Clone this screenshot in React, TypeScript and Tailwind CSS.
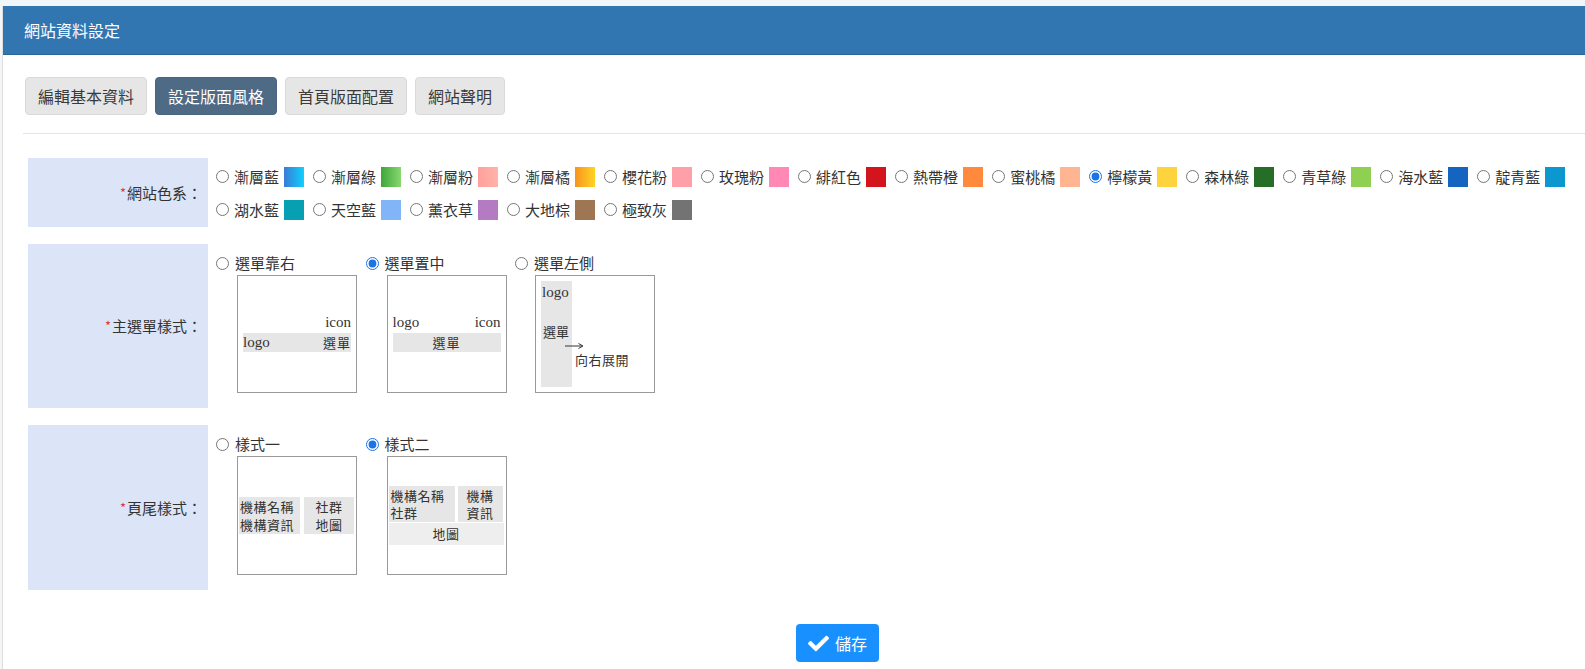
import React from "react";

const cjk = "font-['Noto_Sans_CJK_TC','Noto_Sans',sans-serif]";
const serif = "font-['Liberation_Serif','Noto_Sans_CJK_TC',serif]";

const colors: { name: string; cls: string }[] = [
  { name: "漸層藍", cls: "bg-[linear-gradient(to_right,#3a7bd5,#0fd0ff)]" },
  { name: "漸層綠", cls: "bg-[linear-gradient(to_right,#3ea53a,#88d86f)]" },
  { name: "漸層粉", cls: "bg-[linear-gradient(to_right,#ffa09e,#ffb3a8)]" },
  { name: "漸層橘", cls: "bg-[linear-gradient(to_right,#f7931e,#ffd524)]" },
  { name: "櫻花粉", cls: "bg-[#ffa0a8]" },
  { name: "玫瑰粉", cls: "bg-[#ff88b5]" },
  { name: "緋紅色", cls: "bg-[#d4141d]" },
  { name: "熱帶橙", cls: "bg-[#ff8a3d]" },
  { name: "蜜桃橘", cls: "bg-[#ffb591]" },
  { name: "檸檬黃", cls: "bg-[#ffd33d]" },
  { name: "森林綠", cls: "bg-[#266e27]" },
  { name: "青草綠", cls: "bg-[#8fd053]" },
  { name: "海水藍", cls: "bg-[#1565c0]" },
  { name: "靛青藍", cls: "bg-[#0c98cf]" },
  { name: "湖水藍", cls: "bg-[#07a0b3]" },
  { name: "天空藍", cls: "bg-[#82b5f7]" },
  { name: "薰衣草", cls: "bg-[#b47ac2]" },
  { name: "大地棕", cls: "bg-[#9e7654]" },
  { name: "極致灰", cls: "bg-[#737373]" },
];

function Label({ text }: { text: string }) {
  return (
    <div className="w-[180px] shrink-0 bg-[#dce5f8] flex items-center justify-end pr-[6px] text-[15px] leading-[22px]">
      <span className="text-[#e0393e] text-[13px] mr-[1px]">*</span>
      <span>{text}</span>
    </div>
  );
}

function Radio({ name, checked }: { name: string; checked?: boolean }) {
  return (
    <input
      type="radio"
      name={name}
      defaultChecked={checked}
      className="m-0 w-[13px] h-[13px] shrink-0 accent-[#1a73e8]"
    />
  );
}

const box = "w-[120px] border border-[#9a9a9a] bg-white text-[#333]";

export default function App() {
  return (
    <div className={`min-h-[669px] bg-[#f2f6f8] pt-[6px] pl-[2px] ${cjk} text-[#333]`}>
      <div className="bg-white border-l border-[#dedede] min-h-[663px]">
        <div className="h-[49px] bg-[#3276b1] border-b border-[#2b6699] flex items-center pl-[21px] text-white text-[16px]">
          網站資料設定
        </div>

        <div className="pt-[22px] pl-[22px] flex gap-[8px]">
          {["編輯基本資料", "設定版面風格", "首頁版面配置", "網站聲明"].map((t, i) => (
            <button
              key={t}
              className={
                i === 1
                  ? "h-[38px] px-[12px] border border-[#4a6580] rounded-[4px] bg-[#4e6a85] text-white text-[16px] leading-[24px]"
                  : "h-[38px] px-[12px] border border-[#dadada] rounded-[4px] bg-[#e6e6e6] text-[#3a3a3a] text-[16px] leading-[24px]"
              }
            >
              {t}
            </button>
          ))}
        </div>

        <div className="ml-[20px] mt-[18px] border-t border-[#e5e5e5]" />

        <div className="mt-[24px] ml-[25px] flex flex-col gap-[17px]">
          {/* Row 1 */}
          <div className="flex">
            <Label text="網站色系：" />
            <div className="flex-1 pl-[8px] pt-[2px] pb-[1px] flex flex-wrap">
              {colors.map((c, i) => (
                <label key={c.name} className="h-[33px] flex items-center mr-[9px]">
                  <Radio name="color" checked={i === 9} />
                  <span className="ml-[5px] text-[15px] leading-[22px]">{c.name}</span>
                  <span className={`ml-[5px] w-[20px] h-[20px] ${c.cls}`} />
                </label>
              ))}
            </div>
          </div>

          {/* Row 2 */}
          <div className="flex">
            <Label text="主選單樣式：" />
            <div className="flex-1 pl-[8px] pt-[8px] pb-[15px] flex">
              {/* 選單靠右 */}
              <div className="w-[149.5px] shrink-0">
                <label className="h-[23px] flex items-center gap-[6px] text-[15px]">
                  <Radio name="menu" />
                  <span>選單靠右</span>
                </label>
                <div className={`${box} ml-[21px] h-[118px] px-[5px] pt-[39px]`}>
                  <div className={`${serif} h-[15px] leading-[15px] text-right text-[15px]`}>icon</div>
                  <div className="mt-[3px] h-[19px] bg-[#e6e6e6] flex justify-between items-center">
                    <span className={`${serif} text-[15px] leading-[19px]`}>logo</span>
                    <span className="text-[13px] leading-[19px] tracking-[1px]">選單</span>
                  </div>
                </div>
              </div>
              {/* 選單置中 */}
              <div className="w-[149.5px] shrink-0">
                <label className="h-[23px] flex items-center gap-[6px] text-[15px]">
                  <Radio name="menu" checked />
                  <span>選單置中</span>
                </label>
                <div className={`${box} ml-[21px] h-[118px] px-[5px] pt-[39px]`}>
                  <div className={`${serif} h-[15px] leading-[15px] flex justify-between text-[15px]`}>
                    <span>logo</span>
                    <span>icon</span>
                  </div>
                  <div className="mt-[3px] h-[19px] bg-[#e6e6e6] flex justify-center items-center">
                    <span className="text-[13px] leading-[19px] tracking-[1px]">選單</span>
                  </div>
                </div>
              </div>
              {/* 選單左側 */}
              <div className="w-[149.5px] shrink-0">
                <label className="h-[23px] flex items-center gap-[6px] text-[15px]">
                  <Radio name="menu" />
                  <span>選單左側</span>
                </label>
                <div className={`${box} ml-[20px] h-[118px] p-[5px] flex`}>
                  <div className="w-[31px] h-full bg-[#e6e6e6] pt-[4px] flex flex-col shrink-0">
                    <div className={`${serif} text-[15px] leading-[15px] pl-[1px]`}>logo</div>
                    <div className="mt-[24px] text-[13px] leading-[15px] pl-[2px]">選單</div>
                  </div>
                  <div className="flex flex-col pt-[61px] ml-[-7px]">
                    <svg width="19" height="8" viewBox="0 0 19 8" className="block">
                      <line x1="0" y1="4" x2="17" y2="4" stroke="#333" strokeWidth="1" />
                      <path d="M13.5 1.5 L18 4 L13.5 6.5" fill="none" stroke="#333" strokeWidth="1" />
                    </svg>
                    <div className="ml-[10px] mt-[2px] text-[13px] leading-[15px] whitespace-nowrap tracking-[0.5px]">向右展開</div>
                  </div>
                </div>
              </div>
            </div>
          </div>

          {/* Row 3 */}
          <div className="flex">
            <Label text="頁尾樣式：" />
            <div className="flex-1 pl-[8px] pt-[8px] pb-[15px] flex">
              <div className="w-[149.5px] shrink-0">
                <label className="h-[23px] flex items-center gap-[6px] text-[15px]">
                  <Radio name="footer" />
                  <span>樣式一</span>
                </label>
                <div className={`${box} ml-[21px] h-[119px] flex items-center pl-[1px] pr-[2px] gap-[4px]`}>
                  <div className="w-[61px] h-[37px] bg-[#e6e6e6] flex flex-col justify-center pl-[1px] text-[13px] leading-[18px] tracking-[0.5px] whitespace-nowrap">
                    <div>機構名稱</div>
                    <div>機構資訊</div>
                  </div>
                  <div className="w-[50px] h-[37px] bg-[#e6e6e6] flex flex-col justify-center items-center text-[13px] leading-[18px] tracking-[0.5px]">
                    <div>社群</div>
                    <div>地圖</div>
                  </div>
                </div>
              </div>
              <div className="w-[149.5px] shrink-0">
                <label className="h-[23px] flex items-center gap-[6px] text-[15px]">
                  <Radio name="footer" checked />
                  <span>樣式二</span>
                </label>
                <div className={`${box} ml-[21px] h-[119px] flex flex-col justify-center pl-[1px] pr-[2px]`}>
                  <div className="flex gap-[3px] h-[36px]">
                    <div className="w-[66px] bg-[#e6e6e6] pl-[2px] pt-[1px] text-[13px] leading-[17px] tracking-[0.5px] whitespace-nowrap">
                      <div>機構名稱</div>
                      <div>社群</div>
                    </div>
                    <div className="w-[45px] bg-[#e6e6e6] pt-[1px] flex flex-col items-center text-[13px] leading-[17px] tracking-[0.5px]">
                      <div>機構</div>
                      <div>資訊</div>
                    </div>
                  </div>
                  <div className="mt-[1px] h-[22px] bg-[#eeeeee] text-center text-[13px] leading-[22px] tracking-[0.5px]">地圖</div>
                </div>
              </div>
            </div>
          </div>
        </div>

        <div className="mt-[34px] pl-[793px] pb-[6px]">
          <button className="h-[38px] px-[12px] rounded-[4px] bg-[#1890ff] text-white text-[16px] flex items-center gap-[6px]">
            <svg width="21" height="21" viewBox="0 0 512 512" fill="white">
              <path d="M173.898 439.404l-166.4-166.4c-9.997-9.997-9.997-26.206 0-36.204l36.203-36.204c9.997-9.998 26.207-9.998 36.204 0L192 312.69 432.095 72.596c9.997-9.997 26.207-9.997 36.204 0l36.203 36.204c9.997 9.997 9.997 26.206 0 36.204l-294.4 294.401c-9.998 9.997-26.207 9.997-36.204-.001z" />
            </svg>
            <span>儲存</span>
          </button>
        </div>
      </div>
    </div>
  );
}
